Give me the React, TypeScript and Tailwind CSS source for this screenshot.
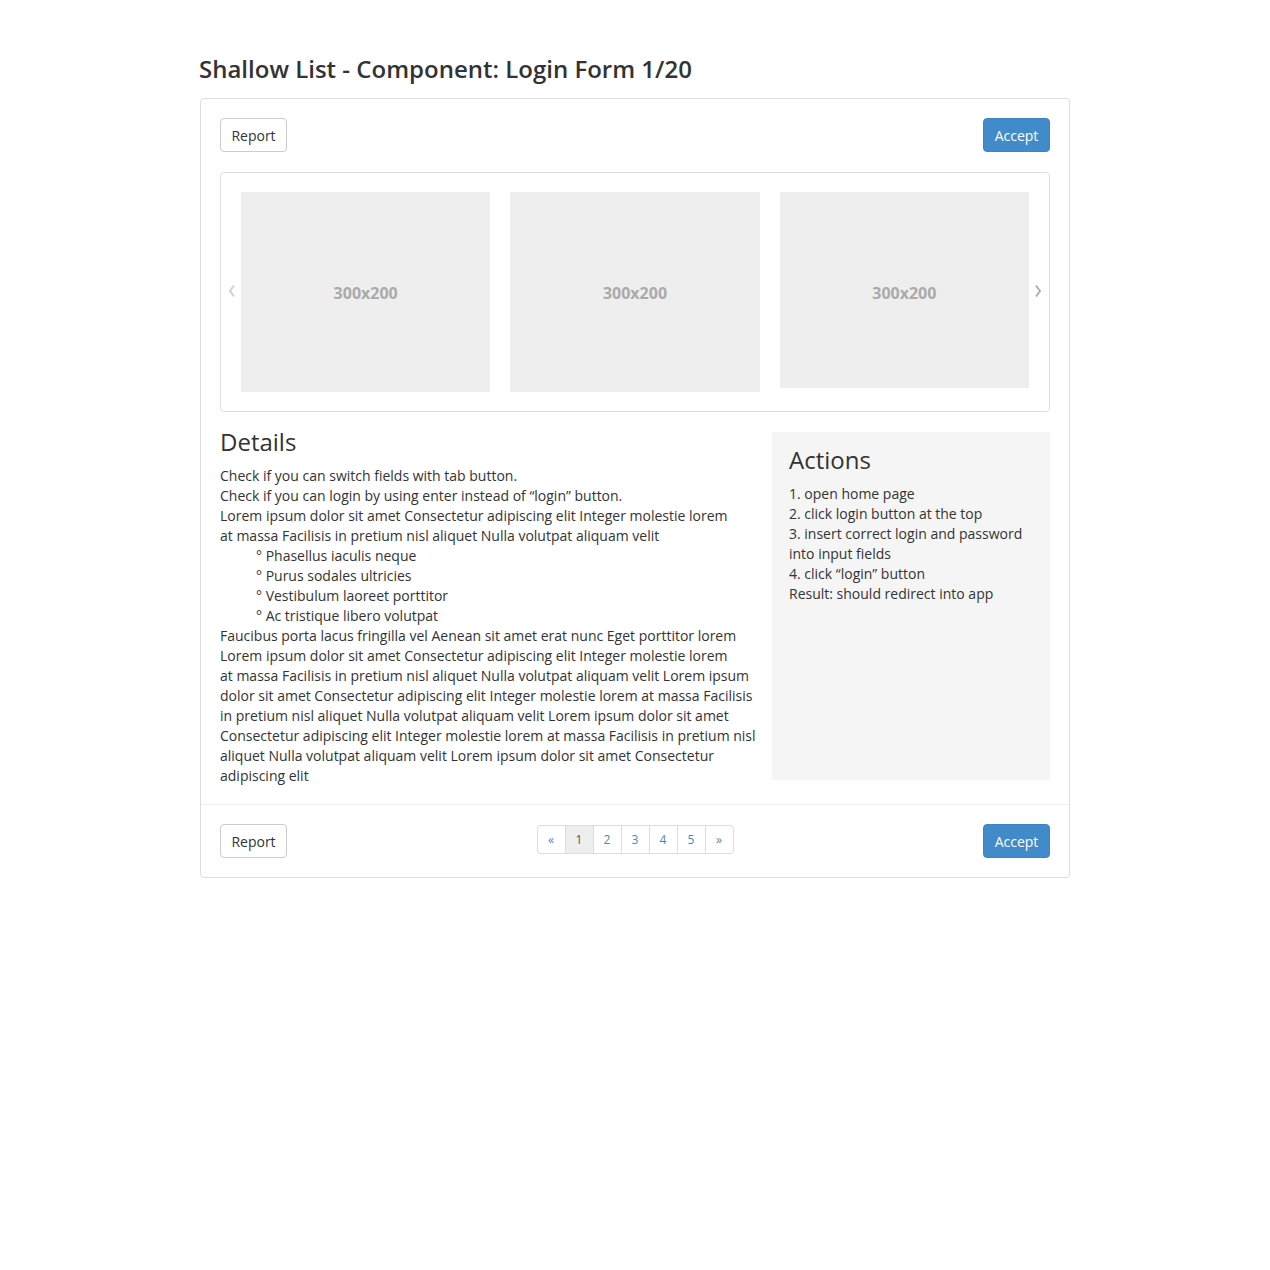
import React from "react";

const font = { fontFamily: '"Open Sans", "Liberation Sans", sans-serif' };

function Btn({ primary, children }: { primary?: boolean; children: React.ReactNode }) {
  return primary ? (
    <button className="h-[34px] w-[67px] rounded-[4px] border border-[#3f84c2] bg-[#428bca] text-[14px] text-white">
      {children}
    </button>
  ) : (
    <button className="h-[34px] w-[67px] rounded-[4px] border border-[#cccccc] bg-white text-[14px] text-[#333333]">
      {children}
    </button>
  );
}

function Placeholder({ short }: { short?: boolean }) {
  return (
    <div
      className={`flex flex-1 justify-center bg-[#eeeeee] pt-[91px] text-[16px] font-bold leading-[20px] text-[#aaaaaa] ${
        short ? "h-[196px]" : "h-[200px]"
      }`}
    >
      300x200
    </div>
  );
}

const details = [
  "Check if you can switch fields with tab button.",
  "Check if you can login by using enter instead of \u201clogin\u201d button.",
  "Lorem ipsum dolor sit amet Consectetur adipiscing elit Integer molestie lorem",
  "at massa Facilisis in pretium nisl aliquet Nulla volutpat aliquam velit",
];
const bullets = [
  "Phasellus iaculis neque",
  "Purus sodales ultricies",
  "Vestibulum laoreet porttitor",
  "Ac tristique libero volutpat",
];
const details2 = [
  "Faucibus porta lacus fringilla vel Aenean sit amet erat nunc Eget porttitor lorem",
  "Lorem ipsum dolor sit amet Consectetur adipiscing elit Integer molestie lorem",
  "at massa Facilisis in pretium nisl aliquet Nulla volutpat aliquam velit Lorem ipsum",
  "dolor sit amet Consectetur adipiscing elit Integer molestie lorem at massa Facilisis",
  "in pretium nisl aliquet Nulla volutpat aliquam velit Lorem ipsum dolor sit amet",
  "Consectetur adipiscing elit Integer molestie lorem at massa Facilisis in pretium nisl",
  "aliquet Nulla volutpat aliquam velit Lorem ipsum dolor sit amet Consectetur",
  "adipiscing elit",
];
const actions = [
  "1. open home page",
  "2. click login button at the top",
  "3. insert correct login and password",
  "into input fields",
  "4. click \u201clogin\u201d button",
  "Result: should redirect into app",
];

export default function App() {
  const pages = ["\u00ab", "1", "2", "3", "4", "5", "\u00bb"];
  return (
    <div className="min-h-[1270px] bg-white text-[#333333]" style={font}>
      <div className="mx-auto w-[870px] pt-[56px]">
        <h1 className="mb-[16px] ml-[-1px] text-[24px] font-semibold leading-[26px] text-[#333333]">
          Shallow List - Component: Login Form 1/20
        </h1>
        <div className="rounded-[4px] border border-[#dddddd]">
          <div className="px-[19px] pb-[18px] pt-[19px]">
            <div className="flex justify-between">
              <Btn>Report</Btn>
              <Btn primary>Accept</Btn>
            </div>
            <div className="relative mt-[20px] rounded-[4px] border border-[#dddddd] px-[20px] pb-[19px] pt-[19px]">
              <svg className="absolute left-[7px] top-[111px]" width="8" height="14" viewBox="0 0 8 14">
                <polyline points="6,1.5 2,7 6,12.5" fill="none" stroke="#cfcfcf" strokeWidth="2" />
              </svg>
              <svg className="absolute right-[7px] top-[111px]" width="8" height="14" viewBox="0 0 8 14">
                <polyline points="2,1.5 6,7 2,12.5" fill="none" stroke="#b0b0b0" strokeWidth="2" />
              </svg>
              <div className="flex items-start gap-[20px]">
                <Placeholder />
                <Placeholder />
                <Placeholder short />
              </div>
            </div>
            <div className="mt-[20px] flex gap-[15px]">
              <div className="flex-1 text-[14px] leading-[20px]">
                <h2 className="mb-[11px] mt-[-3px] text-[24px] font-normal leading-[26px]">Details</h2>
                {details.map((l) => (
                  <div key={l} className="whitespace-nowrap">
                    {l}
                  </div>
                ))}
                {bullets.map((l) => (
                  <div key={l} className="whitespace-nowrap pl-[36px]">
                    {"\u00b0 " + l}
                  </div>
                ))}
                {details2.map((l) => (
                  <div key={l} className="whitespace-nowrap">
                    {l}
                  </div>
                ))}
              </div>
              <div className="h-[348px] w-[278px] bg-[#f5f5f5] px-[17px] pt-[15px] text-[14px] leading-[20px]">
                <h2 className="mb-[11px] text-[24px] font-normal leading-[26px]">Actions</h2>
                {actions.map((l) => (
                  <div key={l} className="whitespace-nowrap">
                    {l}
                  </div>
                ))}
              </div>
            </div>
          </div>
          <div className="flex items-start justify-between border-t border-[#eeeeee] px-[19px] pb-[19px] pt-[19px]">
            <Btn>Report</Btn>
            <div className="mt-[1px] flex">
              {pages.map((p, i) => (
                <div
                  key={p}
                  className={`flex h-[29px] w-[28px] items-center justify-center border-y border-l border-[#dddddd] text-[12px] ${
                    i === pages.length - 1 ? "w-[29px] rounded-r-[4px] border-r" : ""
                  } ${i === 0 ? "rounded-l-[4px]" : ""} ${
                    p === "1" ? "bg-[#eeeeee] text-[#555555]" : "bg-white text-[#428bca]"
                  }`}
                >
                  {p}
                </div>
              ))}
            </div>
            <Btn primary>Accept</Btn>
          </div>
        </div>
      </div>
    </div>
  );
}
